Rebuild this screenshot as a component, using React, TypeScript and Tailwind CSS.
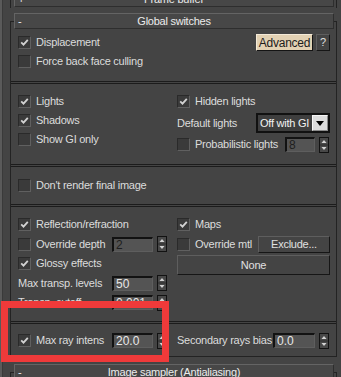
import { ReactNode } from "react";

const TEXT = "text-[#dcdcdc]";

function Check({ checked }: { checked?: boolean }) {
  return (
    <span className="flex h-[13px] w-[13px] shrink-0 items-center justify-center border border-[#2a2a2a] border-r-[#606060] border-b-[#606060] bg-[#3a3a3a]">
      {checked && (
        <svg width="9" height="9" viewBox="0 0 9 9">
          <path d="M1.2 4.4 L3.5 6.7 L7.8 1.8" stroke="#d2d2d2" strokeWidth="1.8" fill="none" />
        </svg>
      )}
    </span>
  );
}

function Arrows() {
  return (
    <svg width="10" height="16" viewBox="0 0 10 16" className="shrink-0">
      <rect x="0.5" y="0.5" width="9" height="15" fill="#484848" stroke="#121212" />
      <path d="M5 3 L7.5 6 L2.5 6 Z" fill="#d4d4d4" />
      <line x1="1" y1="8" x2="9" y2="8" stroke="#2c2c2c" />
      <path d="M2.5 10 L7.5 10 L5 13 Z" fill="#d4d4d4" />
    </svg>
  );
}

function Spinner({ value, w, dim }: { value: string; w: string; dim?: boolean }) {
  return (
    <div className="flex items-center gap-[4px]">
      <div
        className={`${w} h-[15px] border-t-2 border-l-2 border-[#121212] border-r border-b border-r-[#5e5e5e] border-b-[#5e5e5e] bg-[#545454] pl-[2px] text-[12px] leading-[12px] tracking-normal ${
          dim ? "text-[#1e1e1e]" : "text-[#e8e8e8]"
        }`}
      >
        {value}
      </div>
      <Arrows />
    </div>
  );
}

function Row({ children, h = "h-[19px]", className = "" }: { children: ReactNode; h?: string; className?: string }) {
  return <div className={`flex items-center ${h} ${className}`}>{children}</div>;
}

function CheckRow({ label, checked, h }: { label: string; checked?: boolean; h?: string }) {
  return (
    <Row h={h}>
      <Check checked={checked} />
      <span className="ml-[5px] whitespace-nowrap">{label}</span>
    </Row>
  );
}

function Button({ children, className = "" }: { children: ReactNode; className?: string }) {
  return (
    <div
      className={`flex items-center justify-center border border-[#5e5e5e] border-r-[#161616] border-b-[#161616] bg-[#444] text-[#e0e0e0] ${className}`}
    >
      {children}
    </div>
  );
}

function Header({ title, sign }: { title: string; sign: string }) {
  return (
    <div className="relative ml-[3px] mr-[2px] flex h-[16px] items-center border border-[#646464] border-r-[#2e2e2e] border-b-[#2e2e2e] bg-[#474747] text-[#ececec]">
      <span className="w-[14px] pl-[3px] leading-none">{sign}</span>
      <span className="flex-1 whitespace-nowrap pr-[14px] text-center">{title}</span>
    </div>
  );
}

function Sep() {
  return <div className="h-[3px] border-y border-[#1c1c1c]" />;
}

export default function App() {
  return (
    <div
      className={`relative flex h-[377px] w-[341px] overflow-hidden bg-[#444444] font-['Liberation_Sans',Arial,sans-serif] text-[11px] tracking-[-0.25px] ${TEXT}`}
    >
      <div className="w-[2px] shrink-0 bg-[#5a5a5a]" />
      <div className="w-[1px] shrink-0 bg-[#3a3a3a]" />
      <div className="flex w-[327px] flex-col pl-[7px]">
        {/* Frame buffer (collapsed) */}
        <div className="mt-[-9px] h-[17px] w-[327px] shrink-0 border-x border-[#232323]">
          <Header title="Frame buffer" sign="+" />
        </div>

        {/* Global switches */}
        <div className="mt-[13px] w-[327px] shrink-0 border border-[#232323]">
          <div className="mt-[-9px]">
            <Header title="Global switches" sign="-" />
          </div>

          <div className="pb-[10px] pl-[7px] pr-[6px] pt-[4px]">
            <Row className="justify-between">
              <div className="flex items-center">
                <Check checked />
                <span className="ml-[5px]">Displacement</span>
              </div>
              <div className="flex items-center gap-[3px]">
                <div className="flex h-[17px] w-[57px] items-center justify-center border border-[#f4ead8] border-r-[#141414] border-b-[#141414] bg-[#e2d1b3] text-[12px] text-[#1c1c1c]">
                  Advanced
                </div>
                <Button className="h-[17px] w-[14px] text-[11px]">?</Button>
              </div>
            </Row>
            <CheckRow label="Force back face culling" />
          </div>
          <Sep />

          <div className="grid grid-cols-[159px_1fr] pb-[11px] pl-[7px] pr-[6px] pt-[8px]">
            <div className="flex flex-col">
              <CheckRow label="Lights" checked />
              <CheckRow label="Shadows" checked />
              <CheckRow label="Show GI only" />
            </div>
            <div className="flex flex-col">
              <CheckRow label="Hidden lights" checked />
              <Row h="h-[20px]" className="mt-[2px]">
                <span className="w-[79px]">Default lights</span>
                <div className="flex h-[20px] w-[74px] items-center border-2 border-[#111] bg-[#3e3e3e]">
                  <span className="flex-1 overflow-hidden whitespace-nowrap pl-[2px] text-[11px] text-[#f2f2f2]">Off with GI</span>
                  <span className="flex h-[16px] w-[16px] shrink-0 items-center justify-center border border-[#f6f6f6] border-r-[#8a8a8a] border-b-[#8a8a8a] bg-[#dcdcdc]">
                    <svg width="8" height="5" viewBox="0 0 8 5">
                      <path d="M0 0 L8 0 L4 5 Z" fill="#000" />
                    </svg>
                  </span>
                </div>
              </Row>
              <Row h="h-[17px]" className="mt-[3px]">
                <Check />
                <span className="ml-[5px] w-[90px] whitespace-nowrap">Probabilistic lights</span>
                <Spinner value="8" w="w-[30px]" dim />
              </Row>
            </div>
          </div>
          <Sep />

          <div className="pb-[9px] pl-[7px] pr-[6px] pt-[9px]">
            <CheckRow label="Don't render final image" />
          </div>
          <Sep />

          <div className="grid grid-cols-[159px_1fr] pb-[9px] pl-[7px] pr-[6px] pt-[7px]">
            <div className="flex flex-col">
              <CheckRow label="Reflection/refraction" checked h="h-[20px]" />
              <Row h="h-[20px]">
                <Check />
                <span className="ml-[5px] w-[76px] whitespace-nowrap">Override depth</span>
                <Spinner value="2" w="w-[41px]" dim />
              </Row>
              <CheckRow label="Glossy effects" checked />
              <Row h="h-[20px]">
                <span className="w-[94px] whitespace-nowrap">Max transp. levels</span>
                <Spinner value="50" w="w-[41px]" />
              </Row>
              <Row>
                <span className="w-[94px] whitespace-nowrap">Transp. cutoff</span>
                <Spinner value="0.001" w="w-[41px]" />
              </Row>
            </div>
            <div className="flex flex-col">
              <CheckRow label="Maps" checked h="h-[20px]" />
              <Row h="h-[20px]">
                <Check />
                <span className="ml-[5px] w-[63px] whitespace-nowrap">Override mtl</span>
                <Button className="h-[17px] w-[72px] text-[11px]">Exclude...</Button>
              </Row>
              <Button className="mt-[1px] h-[20px] w-[153px] text-[11px]">None</Button>
            </div>
          </div>
          <Sep />

          <div className="grid grid-cols-[159px_1fr] pb-[6px] pl-[7px] pr-[6px] pt-[7px]">
            <Row>
              <Check checked />
              <span className="ml-[5px] w-[76px] whitespace-nowrap">Max ray intens</span>
              <Spinner value="20.0" w="w-[41px]" />
            </Row>
            <Row>
              <span className="w-[96px] whitespace-nowrap">Secondary rays bias</span>
              <Spinner value="0.0" w="w-[42px]" />
            </Row>
          </div>
        </div>

        {/* Image sampler (collapsed header) */}
        <div className="mt-[15px] h-[20px] w-[327px] shrink-0 border-x border-t border-[#232323]">
          <div className="mt-[-9px]">
            <Header title="Image sampler (Antialiasing)" sign="-" />
          </div>
        </div>
      </div>

      {/* red annotation box */}
      <div className="pointer-events-none absolute left-[1px] top-[301px] h-[61px] w-[168px] border-[7px] border-[#ef3a3a]" />
    </div>
  );
}
